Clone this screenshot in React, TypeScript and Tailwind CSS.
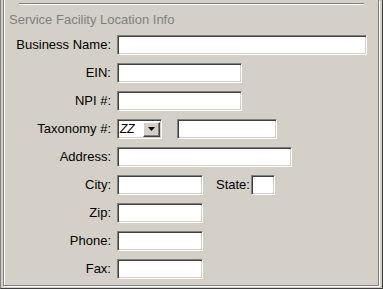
import React from "react";

const sunken =
    "h-[20px] bg-white border border-t-[#808080] border-l-[#808080] border-r-white border-b-white shadow-[inset_1px_1px_0_#404040,inset_-1px_-1px_0_#d4d0c8]";

const Field = ({ label, children }: { label: string; children: React.ReactNode }) => (
    <div className="flex items-center h-[20px]">
        <label className="w-[107px] text-right">{label}</label>
        <div className="ml-[6px] flex items-center">{children}</div>
    </div>
);

const App = () => {
    const [formData, setFormData] = React.useState({
        business: "",
        ein: "",
        npi: "",
        taxonomy: "",
        address: "",
        city: "",
        state: "",
        zip: "",
        phone: "",
        fax: ""
    });

    const set = (key: keyof typeof formData) => (e: React.ChangeEvent<HTMLInputElement>) =>
        setFormData({ ...formData, [key]: e.target.value });

    return (
        <div
            className="w-[383px] h-[289px] bg-[#d4d0c8] text-[13px] leading-[16px] text-black flex flex-col border-l border-l-[#808080] border-r border-b border-r-[#404040] border-b-[#404040] pl-[2px] pr-[3px] pb-[2px]"
            style={{ fontFamily: '"Liberation Sans", Arial, sans-serif' }}
        >
            <div className="flex-1 flex flex-col border-l border-r border-b border-[#808080] shadow-[1px_1px_0_#fff,inset_1px_0_0_#fff]">
                <div className="mt-[3px] ml-[15px] w-[345px] h-[2px] border-t border-t-[#808080] border-b border-b-white" />

                <div className="mt-[7px] ml-[5px] text-[#808080]">Service Facility Location Info</div>

                <div className="mt-[7px] flex flex-col gap-[8px]">
                    <Field label="Business Name:">
                        <input className={`${sunken} w-[250px] outline-none`} value={formData.business} onChange={set("business")} />
                    </Field>
                    <Field label="EIN:">
                        <input className={`${sunken} w-[125px] outline-none`} value={formData.ein} onChange={set("ein")} />
                    </Field>
                    <Field label="NPI #:">
                        <input className={`${sunken} w-[125px] outline-none`} value={formData.npi} onChange={set("npi")} />
                    </Field>
                    <Field label="Taxonomy #:">
                        <div className={`${sunken} w-[45px] h-[19px] flex items-center justify-between`}>
                            <span className="pl-[2px] italic text-[12px]">ZZ</span>
                            <span className="w-[17px] h-[15px] mr-[1px] bg-[#d4d0c8] border border-t-white border-l-white border-r-[#404040] border-b-[#404040] shadow-[inset_-1px_-1px_0_#808080] flex items-center justify-center">
                                <svg width="7" height="4" viewBox="0 0 7 4">
                                    <path d="M0 0H7L3.5 4Z" fill="#000" />
                                </svg>
                            </span>
                        </div>
                        <input className={`${sunken} ml-[15px] w-[100px] outline-none`} value={formData.taxonomy} onChange={set("taxonomy")} />
                    </Field>
                    <Field label="Address:">
                        <input className={`${sunken} w-[175px] outline-none`} value={formData.address} onChange={set("address")} />
                    </Field>
                    <Field label="City:">
                        <input className={`${sunken} w-[86px] outline-none`} value={formData.city} onChange={set("city")} />
                        <span className="ml-[13px] mr-[1px]">State:</span>
                        <input className={`${sunken} w-[24px] outline-none`} value={formData.state} onChange={set("state")} />
                    </Field>
                    <Field label="Zip:">
                        <input className={`${sunken} w-[86px] outline-none`} value={formData.zip} onChange={set("zip")} />
                    </Field>
                    <Field label="Phone:">
                        <input className={`${sunken} w-[86px] outline-none`} value={formData.phone} onChange={set("phone")} />
                    </Field>
                    <Field label="Fax:">
                        <input className={`${sunken} w-[86px] outline-none`} value={formData.fax} onChange={set("fax")} />
                    </Field>
                </div>
            </div>
        </div>
    );
};

export default App;
